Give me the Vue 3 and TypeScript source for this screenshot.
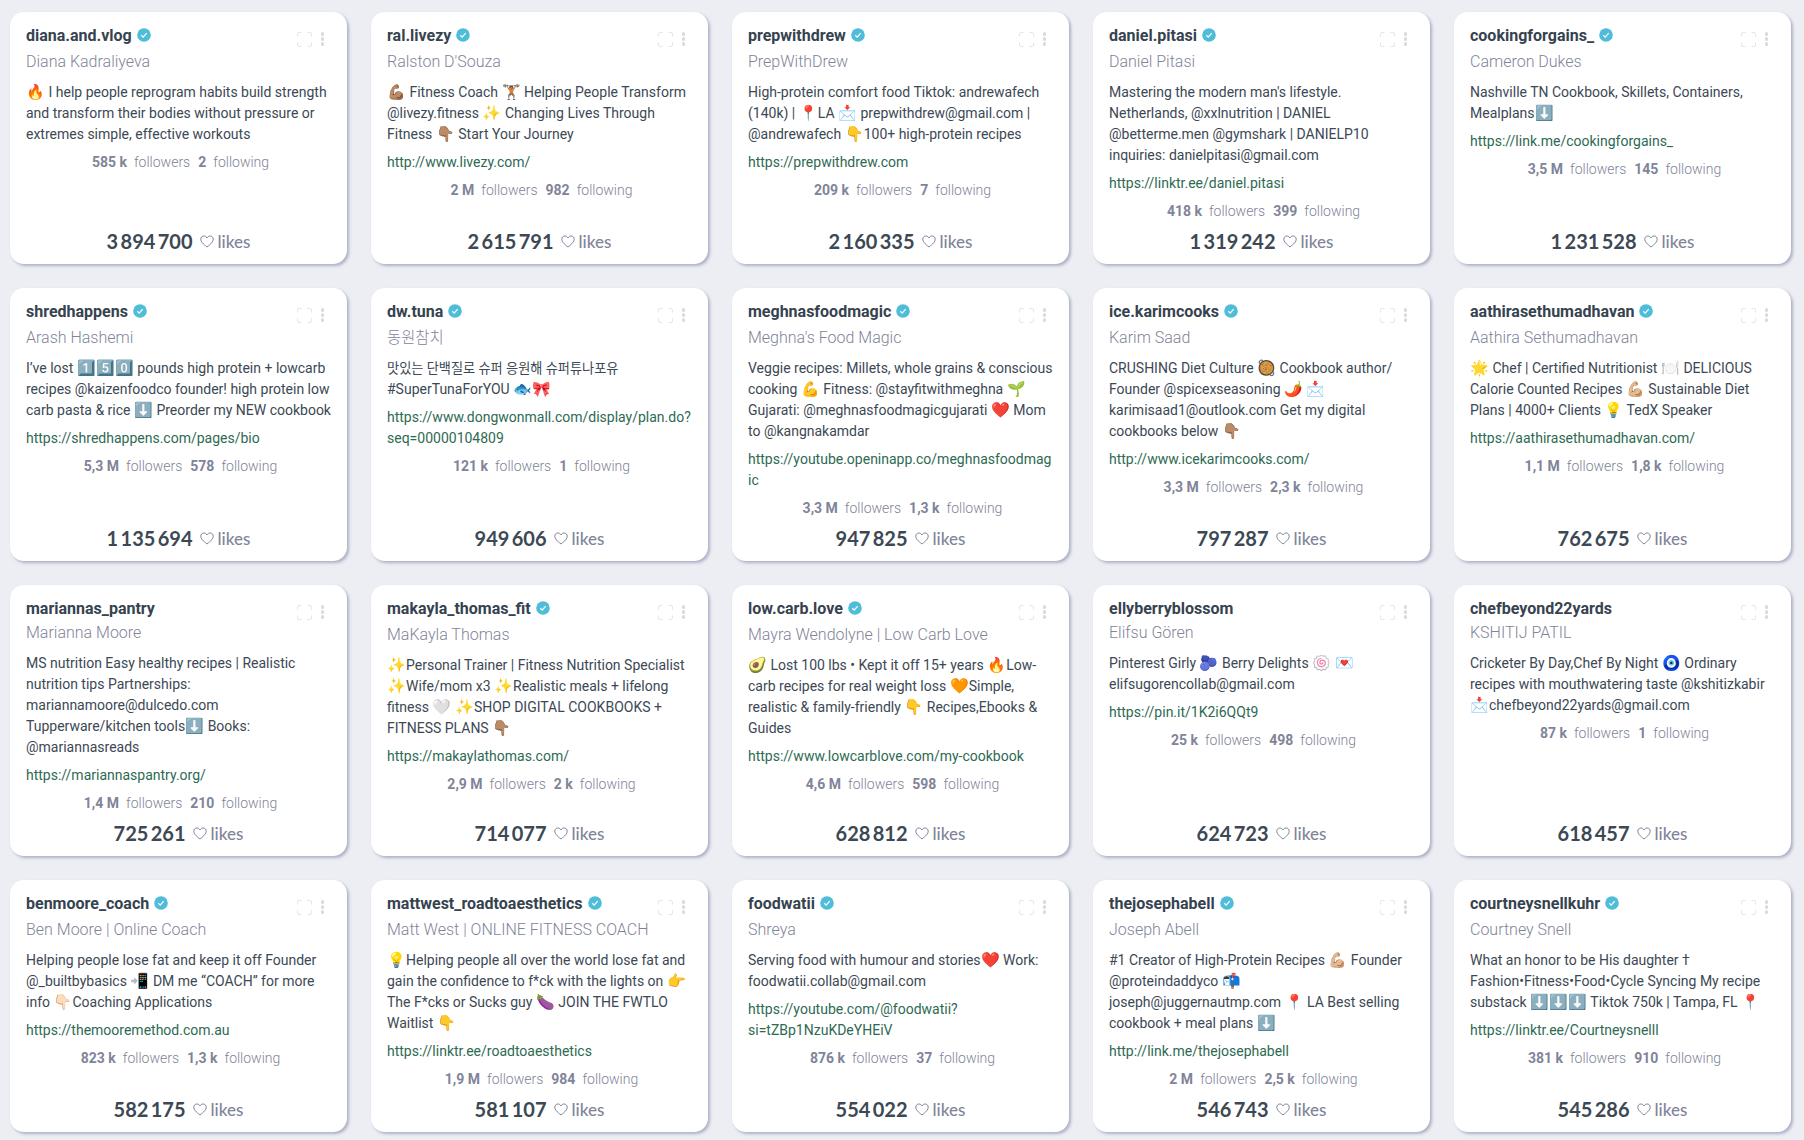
<template>
  <div class="grid">
    <div v-for="c in cards" :key="c.user" class="card">
      <div class="tools">
        <svg class="expand" viewBox="0 0 15 15" width="15" height="15">
          <path d="M.5 4.500V2A1.500 1.500 0 0 1 2 .5h2.500M10.500.5H13A1.500 1.500 0 0 1 14.500 2v2.500M14.500 10.500V13a1.500 1.500 0 0 1-1.500 1.500h-2.500M4.500 14.500H2A1.500 1.500 0 0 1 .5 13v-2.500" fill="none" stroke="#e3e5ea" stroke-width="1" />
        </svg>
        <div class="dots"><i></i><i></i><i></i></div>
      </div>
      <div class="head">
        <span class="user">{{ c.user }}</span>
        <svg v-if="c.ok" class="badge" viewBox="0 0 14 14" width="14" height="14">
          <circle cx="7" cy="7" r="6.800" fill="#4fbcd8" />
          <path d="M4.300 7.300l1.900 1.800 3.500-3.900" fill="none" stroke="#fff" stroke-width="1.200" />
        </svg>
      </div>
      <div class="name" :class="{ ko: hangul.test(c.name) }">{{ c.name }}</div>
      <div class="bio"><span v-for="(p, i) in parts(c.bio)" :key="i" :class="p.kind">{{ p.text }}</span></div>
      <a v-if="c.link" class="link">{{ c.link }}</a>
      <div class="stats">
        <b>{{ c.fol }}</b><span>followers</span><b>{{ c.ing }}</b><span>following</span>
      </div>
      <div class="likes">
        <strong>{{ c.likes }}</strong>
        <svg class="heart" viewBox="0 0 14 13" width="14" height="13">
          <path d="M7 12C3 8.800.8 6.800.8 4.200.8 2.300 2.200 1 3.900 1 5.200 1 6.300 1.700 7 3c.7-1.300 1.800-2 3.100-2 1.700 0 3.100 1.300 3.100 3.200C13.200 6.800 11 8.800 7 12z" fill="none" stroke="#7f8499" stroke-width="1" />
        </svg>
        <span>likes</span>
      </div>
    </div>
  </div>
</template>

<script setup lang="ts">
interface Card {
  user: string;
  ok: boolean;
  name: string;
  bio: string;
  link: string;
  fol: string;
  ing: string;
  likes: string;
}

const cards: Card[] = [
  { user: "diana.and.vlog", ok: true, name: "Diana Kadraliyeva", bio: "🔥 I help people reprogram habits build strength and transform their bodies without pressure or extremes simple, effective workouts", link: "", fol: "585 k", ing: "2", likes: "3 894 700" },
  { user: "ral.livezy", ok: true, name: "Ralston D'Souza", bio: "💪🏽 Fitness Coach 🏋🏽 Helping People Transform @livezy.fitness ✨ Changing Lives Through Fitness 👇🏽 Start Your Journey", link: "http://www.livezy.com/", fol: "2 M", ing: "982", likes: "2 615 791" },
  { user: "prepwithdrew", ok: true, name: "PrepWithDrew", bio: "High-protein comfort food Tiktok: andrewafech (140k) | 📍LA 📩 prepwithdrew@gmail.com | @andrewafech 👇100+ high-protein recipes", link: "https://prepwithdrew.com", fol: "209 k", ing: "7", likes: "2 160 335" },
  { user: "daniel.pitasi", ok: true, name: "Daniel Pitasi", bio: "Mastering the modern man's lifestyle. Netherlands, @xxlnutrition | DANIEL @betterme.men @gymshark | DANIELP10 inquiries: danielpitasi@gmail.com", link: "https://linktr.ee/daniel.pitasi", fol: "418 k", ing: "399", likes: "1 319 242" },
  { user: "cookingforgains_", ok: true, name: "Cameron Dukes", bio: "Nashville TN Cookbook, Skillets, Containers, Mealplans⬇️", link: "https://link.me/cookingforgains_", fol: "3,5 M", ing: "145", likes: "1 231 528" },
  { user: "shredhappens", ok: true, name: "Arash Hashemi", bio: "I’ve lost 1️⃣5️⃣0️⃣ pounds high protein + lowcarb recipes @kaizenfoodco founder! high protein low carb pasta & rice ⬇️ Preorder my NEW cookbook", link: "https://shredhappens.com/pages/bio", fol: "5,3 M", ing: "578", likes: "1 135 694" },
  { user: "dw.tuna", ok: true, name: "동원참치", bio: "맛있는 단백질로 슈퍼 응원해 슈퍼튜나포유 #SuperTunaForYOU 🐟🎀", link: "https://www.dongwonmall.com/display/plan.do?seq=00000104809", fol: "121 k", ing: "1", likes: "949 606" },
  { user: "meghnasfoodmagic", ok: true, name: "Meghna's Food Magic", bio: "Veggie recipes: Millets, whole grains & conscious cooking 💪 Fitness: @stayfitwithmeghna 🌱 Gujarati: @meghnasfoodmagicgujarati ❤️ Mom to @kangnakamdar", link: "https://youtube.openinapp.co/meghnasfoodmagic", fol: "3,3 M", ing: "1,3 k", likes: "947 825" },
  { user: "ice.karimcooks", ok: true, name: "Karim Saad", bio: "CRUSHING Diet Culture 🥘 Cookbook author/ Founder @spicexseasoning 🌶️ 📩 karimisaad1@outlook.com Get my digital cookbooks below 👇🏽", link: "http://www.icekarimcooks.com/", fol: "3,3 M", ing: "2,3 k", likes: "797 287" },
  { user: "aathirasethumadhavan", ok: true, name: "Aathira Sethumadhavan", bio: "🌟 Chef | Certified Nutritionist 🍽️ DELICIOUS Calorie Counted Recipes 💪🏼 Sustainable Diet Plans | 4000+ Clients 💡 TedX Speaker", link: "https://aathirasethumadhavan.com/", fol: "1,1 M", ing: "1,8 k", likes: "762 675" },
  { user: "mariannas_pantry", ok: false, name: "Marianna Moore", bio: "MS nutrition Easy healthy recipes | Realistic nutrition tips Partnerships: mariannamoore@dulcedo.com Tupperware/kitchen tools⬇️ Books: @mariannasreads", link: "https://mariannaspantry.org/", fol: "1,4 M", ing: "210", likes: "725 261" },
  { user: "makayla_thomas_fit", ok: true, name: "MaKayla Thomas", bio: "✨Personal Trainer | Fitness Nutrition Specialist ✨Wife/mom x3 ✨Realistic meals + lifelong fitness 🤍 ✨SHOP DIGITAL COOKBOOKS + FITNESS PLANS 👇🏽", link: "https://makaylathomas.com/", fol: "2,9 M", ing: "2 k", likes: "714 077" },
  { user: "low.carb.love", ok: true, name: "Mayra Wendolyne | Low Carb Love", bio: "🥑 Lost 100 lbs • Kept it off 15+ years 🔥Low-carb recipes for real weight loss 🧡Simple, realistic & family-friendly 👇 Recipes,Ebooks & Guides", link: "https://www.lowcarblove.com/my-cookbook", fol: "4,6 M", ing: "598", likes: "628 812" },
  { user: "ellyberryblossom", ok: false, name: "Elifsu Gören", bio: "Pinterest Girly 🫐 Berry Delights 🍥 💌 elifsugorencollab@gmail.com", link: "https://pin.it/1K2i6QQt9", fol: "25 k", ing: "498", likes: "624 723" },
  { user: "chefbeyond22yards", ok: false, name: "KSHITIJ PATIL", bio: "Cricketer By Day,Chef By Night 🧿 Ordinary recipes with mouthwatering taste @kshitizkabir 📩chefbeyond22yards@gmail.com", link: "", fol: "87 k", ing: "1", likes: "618 457" },
  { user: "benmoore_coach", ok: true, name: "Ben Moore | Online Coach", bio: "Helping people lose fat and keep it off Founder @_builtbybasics 📲 DM me “COACH” for more info 👇🏻Coaching Applications", link: "https://themooremethod.com.au", fol: "823 k", ing: "1,3 k", likes: "582 175" },
  { user: "mattwest_roadtoaesthetics", ok: true, name: "Matt West | ONLINE FITNESS COACH", bio: "💡Helping people all over the world lose fat and gain the confidence to f*ck with the lights on 👉 The F*cks or Sucks guy 🍆 JOIN THE FWTLO Waitlist 👇", link: "https://linktr.ee/roadtoaesthetics", fol: "1,9 M", ing: "984", likes: "581 107" },
  { user: "foodwatii", ok: true, name: "Shreya", bio: "Serving food with humour and stories❤️ Work: foodwatii.collab@gmail.com", link: "https://youtube.com/@foodwatii?si=tZBp1NzuKDeYHEiV", fol: "876 k", ing: "37", likes: "554 022" },
  { user: "thejosephabell", ok: true, name: "Joseph Abell", bio: "#1 Creator of High-Protein Recipes 💪🏼 Founder @proteindaddyco 📬 joseph@juggernautmp.com 📍 LA Best selling cookbook + meal plans ⬇️", link: "http://link.me/thejosephabell", fol: "2 M", ing: "2,5 k", likes: "546 743" },
  { user: "courtneysnellkuhr", ok: true, name: "Courtney Snell", bio: "What an honor to be His daughter † Fashion•Fitness•Food•Cycle Syncing My recipe substack ⬇️⬇️⬇️ Tiktok 750k | Tampa, FL 📍", link: "https://linktr.ee/Courtneysnelll", fol: "381 k", ing: "910", likes: "545 286" },
];

const hangul = /[\uAC00-\uD7A3]/;
const runs = /\d\uFE0F?\u20E3|\p{Extended_Pictographic}[\uFE0F\u{1F3FB}-\u{1F3FF}]?|[\uAC00-\uD7A3]+(?: [\uAC00-\uD7A3]+)*/gu;

// emoji and hangul get their own span, their sizes differ from the latin text
function parts(bio: string) {
  const out: { text: string; kind: string }[] = [];
  let last = 0;
  for (const m of bio.matchAll(runs)) {
    if (m.index > last) out.push({ text: bio.slice(last, m.index), kind: "" });
    out.push({ text: m[0], kind: hangul.test(m[0]) ? "ko" : "emoji" });
    last = m.index + m[0].length;
  }
  if (last < bio.length) out.push({ text: bio.slice(last), kind: "" });
  return out;
}
</script>

<style>
body {
  background: #eceef4;
  overflow: hidden;
}
</style>

<style scoped>
.grid {
  display: grid;
  grid-template-columns: repeat(5, 337px);
  gap: 24px;
  padding: 12px 10px;
  font-family: Roboto, "Noto Sans CJK KR", sans-serif;
}

.card {
  position: relative;
  display: flex;
  flex-direction: column;
  padding: 14px 16px 11px;
  background: #fff;
  border-radius: 14px;
  box-shadow: 2px 2px 3px rgba(122, 127, 158, 0.55);
}

.tools {
  position: absolute;
  top: 20px;
  right: 23px;
  display: flex;
  gap: 9px;
}

.expand {
  display: block;
}

.dots {
  display: flex;
  flex-direction: column;
  gap: 1.500px;
}

.dots i {
  display: block;
  width: 3.500px;
  height: 3.500px;
  border-radius: 50%;
  background: #d8dae0;
}

.head {
  display: flex;
  align-items: flex-start;
}

.user {
  font-size: 16px;
  line-height: 20px;
  font-weight: 700;
  color: #36434f;
}

.badge {
  display: block;
  margin: 2px 0 6px 5px;
}

.name {
  font-size: 16px;
  line-height: 28px;
  font-weight: 300;
  color: #7f8499;
  margin-bottom: 6px;
}

.name.ko {
  font-size: 15.400px;
}

.bio {
  font-size: 14px;
  line-height: 21px;
  color: #3c4854;
}

.emoji {
  font-size: 15px;
  line-height: 1;
}

.ko {
  font-size: 13.200px;
}

.link {
  margin-top: 7px;
  font-size: 14px;
  line-height: 21px;
  color: #2e6a52;
  overflow-wrap: anywhere;
}

.stats {
  display: flex;
  justify-content: center;
  margin-top: 7px;
  padding-left: 4px;
  font-size: 14px;
  line-height: 21px;
  font-weight: 300;
  color: #7f8499;
}

.stats b {
  font-weight: 700;
  margin-right: 7px;
}

.stats span {
  margin-right: 8px;
}

.stats span:last-child {
  margin-right: 0;
}

.likes {
  display: flex;
  justify-content: center;
  align-items: center;
  margin-top: auto;
  padding-top: 7px;
  height: 31px;
  box-sizing: border-box;
  font-family: Lato, sans-serif;
  color: #7f8499;
  font-size: 17px;
  font-weight: 500;
}

.likes strong {
  font-size: 20px;
  font-weight: 700;
  color: #3c4854;
  word-spacing: -2.500px;
}

.heart {
  margin: 0 4px 0 7px;
}
</style>
